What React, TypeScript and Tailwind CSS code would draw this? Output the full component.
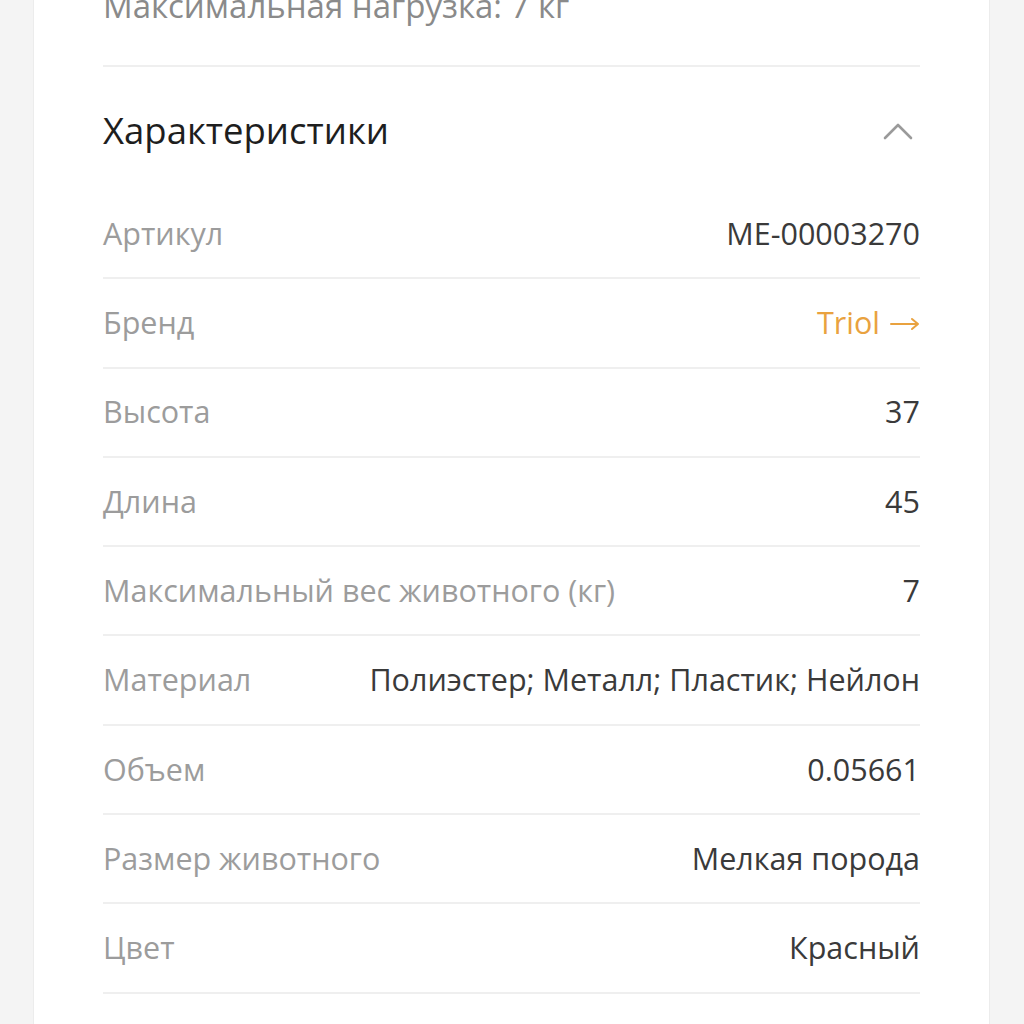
const rows: { label: string; value: string; link?: boolean }[] = [
  { label: 'Артикул', value: 'ME-00003270' },
  { label: 'Бренд', value: 'Triol', link: true },
  { label: 'Высота', value: '37' },
  { label: 'Длина', value: '45' },
  { label: 'Максимальный вес животного (кг)', value: '7' },
  { label: 'Материал', value: 'Полиэстер; Металл; Пластик; Нейлон' },
  { label: 'Объем', value: '0.05661' },
  { label: 'Размер животного', value: 'Мелкая порода' },
  { label: 'Цвет', value: 'Красный' },
  { label: 'Страна', value: 'Китай' },
];

export default function App() {
  return (
    <div className="h-[1024px] overflow-hidden bg-[#f4f4f4] font-['Open_Sans',sans-serif]">
      <div className="ml-[33px] w-[957px] min-h-[1100px] bg-white border-x border-[#ececec]">
        <div className="px-[69px]">
          <div className="-mt-[16px] h-[83px] border-b-2 border-[#efefef] text-[33px] leading-[44px] text-[#8a8a8a]">
            Максимальная нагрузка: 7 кг
          </div>
          <div className="h-[123px] pt-[40px] flex items-start justify-between">
            <h2 className="text-[36.5px] leading-[46px] text-[#1e1e1e]">Характеристики</h2>
            <svg width="32" height="20" viewBox="0 0 32 20" className="mr-[6px] mt-[14px]" fill="none" stroke="#9a9a9a" strokeWidth="2.6" strokeLinecap="round" strokeLinejoin="round">
              <path d="M3 17L16 4l13 13" />
            </svg>
          </div>
          {rows.map((r) => (
            <div key={r.label} className="h-[89.3px] border-b-2 border-[#efefef] flex items-center justify-between text-[30.5px]">
              <span className="text-[#9c9c9c]">{r.label}</span>
              {r.link ? (
                <span className="flex items-center gap-[10px] text-[#e9a23f]">
                  {r.value}
                  <svg width="30" height="14" viewBox="0 0 30 14" fill="none" stroke="#e9a23f" strokeWidth="2" strokeLinecap="round" strokeLinejoin="round" className="mt-[2px]">
                    <path d="M1 7h27M22 2l6 5-6 5" />
                  </svg>
                </span>
              ) : (
                <span className="text-[#3a3a3a]">{r.value}</span>
              )}
            </div>
          ))}
        </div>
      </div>
    </div>
  );
}
